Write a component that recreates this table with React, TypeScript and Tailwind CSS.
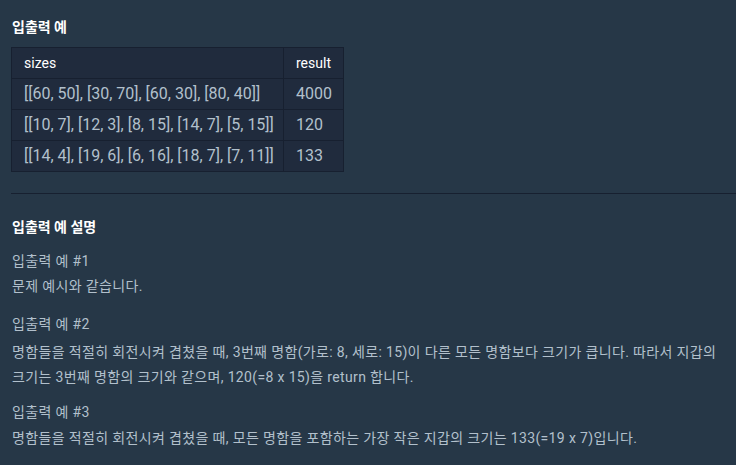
import React from "react";

const rows = [
  ["[[60, 50], [30, 70], [60, 30], [80, 40]]", "4000"],
  ["[[10, 7], [12, 3], [8, 15], [14, 7], [5, 15]]", "120"],
  ["[[14, 4], [19, 6], [6, 16], [18, 7], [7, 11]]", "133"],
];

export default function App() {
  return (
    <div
      className="w-full h-[465px] bg-[#263747] pl-[11px] pt-[16px] overflow-hidden"
      style={{ fontFamily: 'Roboto, "Noto Sans CJK KR", sans-serif' }}
    >
      <h5 className="text-[14px] leading-[22px] font-bold text-white pl-[1px]">입출력 예</h5>
      <table className="mt-[9px] border-collapse border border-[#172030] bg-[#202b3d] table-fixed w-[332px]">
        <thead>
          <tr className="h-[31px]">
            <th className="border border-[#172030] text-left text-[14px] font-normal text-white px-[12px] w-[272px]">sizes</th>
            <th className="border border-[#172030] text-left text-[14px] font-normal text-white px-[12px] w-[60px]">result</th>
          </tr>
        </thead>
        <tbody>
          {rows.map((r, i) => (
            <tr key={i} className="h-[31px]">
              <td className="border border-[#172030] text-[16px] leading-[20px] text-[#b2c0cc] px-[12px] whitespace-nowrap">{r[0]}</td>
              <td className="border border-[#172030] text-[16px] leading-[20px] text-[#b2c0cc] px-[12px] pr-[10px]">{r[1]}</td>
            </tr>
          ))}
        </tbody>
      </table>
      <div className="mt-[21px] h-px bg-[#172030]" />
      <h5 className="mt-[22px] text-[14px] leading-[22px] font-bold text-white pl-[1px]">입출력 예 설명</h5>
      <div className="mt-[11px] text-[14px] leading-[25px] tracking-[0.35px] text-[#b2c0cc] pl-[1px] break-keep">
        <p>입출력 예 #1</p>
        <p>문제 예시와 같습니다.</p>
        <p className="mt-[13px]">입출력 예 #2</p>
        <p className="mt-[3px] pr-[10px]">
          명함들을 적절히 회전시켜 겹쳤을 때, 3번째 명함(가로: 8, 세로: 15)이 다른 모든 명함보다 크기가 큽니다. 따라서 지갑의 크기는 3번째 명함의 크기와 같으며, 120(=8 x 15)을 return 합니다.
        </p>
        <p className="mt-[10px]">입출력 예 #3</p>
        <p className="mt-[1px]">명함들을 적절히 회전시켜 겹쳤을 때, 모든 명함을 포함하는 가장 작은 지갑의 크기는 133(=19 x 7)입니다.</p>
      </div>
    </div>
  );
}
